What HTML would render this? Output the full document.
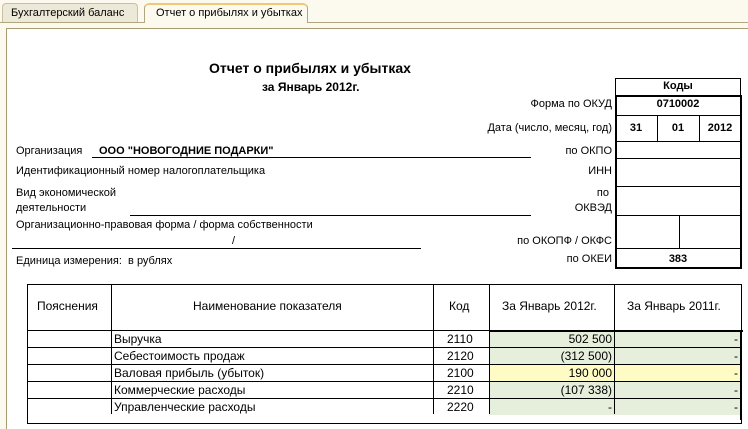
<!DOCTYPE html>
<html><head><meta charset="utf-8"><style>
body{margin:0;width:748px;height:411px;overflow:hidden;background:#fcf9ee;font-family:"Liberation Sans",Arial,sans-serif;font-size:11px;color:#000;position:relative}
.a{position:absolute;white-space:nowrap}
.r{text-align:right}
.c{text-align:center}
.b{font-weight:bold}
.hl{position:absolute;height:1px;background:#000}
.vl{position:absolute;width:1px;background:#000}
</style></head><body>
<!-- tabs -->
<div class="a" style="left:2px;top:3px;width:134px;height:19px;background:#ece9d8;border:1px solid #c8c0a0;border-bottom:none;border-radius:4px 4px 0 0"></div>
<div class="a" style="left:11px;top:7px;font-size:11px">Бухгалтерский баланс</div>
<div class="a" style="left:0;top:22px;width:748px;height:1px;background:#b0a680"></div>
<div class="a" style="left:144px;top:3px;width:164px;height:20px;background:#fcf9ee;border:1px solid #b0a680;border-bottom:none;border-top:2px solid #f0c878;border-radius:5px 5px 0 0;box-sizing:border-box"></div>
<div class="a" style="left:156px;top:7px;font-size:11px">Отчет о прибылях и убытках</div>
<!-- panel -->
<div class="a" style="left:6px;top:28px;width:760px;height:400px;background:#fff;border:1px solid #a89c70;border-width:1px 0 0 1px"></div>

<div class="a b" style="left:209px;top:60px;font-size:14px">Отчет о прибылях и убытках</div>
<div class="a b" style="left:262px;top:80px;font-size:12px">за Январь 2012г.</div>

<!-- codes box -->
<div class="a" style="left:615px;top:78px;width:126px;height:18px;border:1px solid #000;box-sizing:border-box"></div>
<div class="a b c" style="left:615px;top:80px;width:126px">Коды</div>
<div class="a" style="left:615px;top:95px;width:127px;height:174px;border:2px solid #000;box-sizing:border-box"></div>
<div class="hl" style="left:616px;top:115px;width:125px"></div>
<div class="hl" style="left:616px;top:141px;width:125px"></div>
<div class="hl" style="left:616px;top:158px;width:125px"></div>
<div class="hl" style="left:616px;top:186px;width:125px"></div>
<div class="hl" style="left:616px;top:215px;width:125px"></div>
<div class="hl" style="left:616px;top:248px;width:125px"></div>
<div class="vl" style="left:657px;top:115px;height:26px"></div>
<div class="vl" style="left:699px;top:115px;height:26px"></div>
<div class="vl" style="left:679px;top:215px;height:33px"></div>
<div class="a b c" style="left:615px;top:98px;width:126px">0710002</div>
<div class="a b c" style="left:615px;top:122px;width:42px">31</div>
<div class="a b c" style="left:657px;top:122px;width:42px">01</div>
<div class="a b c" style="left:699px;top:122px;width:42px">2012</div>
<div class="a b c" style="left:615px;top:253px;width:126px">383</div>

<div class="a r" style="right:136px;top:98px">Форма по ОКУД</div>
<div class="a r" style="right:136px;top:122px">Дата (число, месяц, год)</div>
<div class="a r" style="right:136px;top:145px">по ОКПО</div>
<div class="a r" style="right:136px;top:165px">ИНН</div>
<div class="a r" style="right:139px;top:187px">по</div>
<div class="a r" style="right:136px;top:202px">ОКВЭД</div>
<div class="a r" style="right:136px;top:235px">по ОКОПФ / ОКФС</div>
<div class="a r" style="right:136px;top:253px">по ОКЕИ</div>

<div class="a" style="left:16px;top:145px">Организация</div>
<div class="a b" style="left:99px;top:145px">ООО "НОВОГОДНИЕ ПОДАРКИ"</div>
<div class="hl" style="left:92px;top:157px;width:439px"></div>
<div class="a" style="left:16px;top:165px">Идентификационный номер налогоплательщика</div>
<div class="a" style="left:16px;top:187px">Вид экономической</div>
<div class="a" style="left:16px;top:202px">деятельности</div>
<div class="hl" style="left:130px;top:215px;width:401px"></div>
<div class="a" style="left:16px;top:219px">Организационно-правовая форма / форма собственности</div>
<div class="a" style="left:232px;top:235px">/</div>
<div class="hl" style="left:12px;top:248px;width:409px"></div>
<div class="a" style="left:16px;top:255px">Единица измерения:&nbsp; в рублях</div>

<!-- table -->
<div class="a" style="left:489px;top:330px;width:252px;height:85px;background:#e6eedc"></div>
<div class="a" style="left:489px;top:364px;width:252px;height:17px;background:#fefcc4"></div>
<div class="a" style="left:27px;top:284px;width:715px;height:140px;border:1px solid #000;box-sizing:border-box"></div>
<div class="vl" style="left:111px;top:284px;height:130px"></div>
<div class="vl" style="left:433px;top:284px;height:130px"></div>
<div class="vl" style="left:489px;top:284px;height:130px"></div>
<div class="vl" style="left:614px;top:284px;height:130px"></div>
<div class="hl" style="left:27px;top:330px;width:715px"></div>
<div class="hl" style="left:489px;top:330px;width:254px;height:2px"></div>
<div class="vl" style="left:740px;top:330px;height:90px;width:2px"></div>
<div class="hl" style="left:27px;top:347px;width:715px"></div>
<div class="hl" style="left:27px;top:364px;width:715px"></div>
<div class="hl" style="left:27px;top:381px;width:715px"></div>
<div class="hl" style="left:27px;top:398px;width:715px"></div>

<div class="a" style="left:37px;top:299px;font-size:12px">Пояснения</div>
<div class="a" style="left:193px;top:299px;font-size:12px">Наименование показателя</div>
<div class="a" style="left:449px;top:299px;font-size:12px">Код</div>
<div class="a" style="left:502px;top:299px;font-size:12px">За Январь 2012г.</div>
<div class="a" style="left:627px;top:299px;font-size:12px">За Январь 2011г.</div>

<div class="a" style="left:114px;top:332px;font-size:12px">Выручка</div>
<div class="a" style="left:114px;top:349px;font-size:12px">Себестоимость продаж</div>
<div class="a" style="left:114px;top:366px;font-size:12px">Валовая прибыль (убыток)</div>
<div class="a" style="left:114px;top:383px;font-size:12px">Коммерческие расходы</div>
<div class="a" style="left:114px;top:400px;font-size:12px">Управленческие расходы</div>

<div class="a" style="left:447px;top:332px;font-size:12px">2110</div>
<div class="a" style="left:447px;top:349px;font-size:12px">2120</div>
<div class="a" style="left:447px;top:366px;font-size:12px">2100</div>
<div class="a" style="left:447px;top:383px;font-size:12px">2210</div>
<div class="a" style="left:447px;top:400px;font-size:12px">2220</div>

<div class="a r" style="right:136px;top:332px;font-size:12px">502 500</div>
<div class="a r" style="right:136px;top:349px;font-size:12px">(312 500)</div>
<div class="a r" style="right:136px;top:366px;font-size:12px">190 000</div>
<div class="a r" style="right:136px;top:383px;font-size:12px">(107 338)</div>
<div class="a r" style="right:136px;top:400px;font-size:12px">-</div>
<div class="a r" style="right:10px;top:332px;font-size:12px">-</div>
<div class="a r" style="right:10px;top:349px;font-size:12px">-</div>
<div class="a r" style="right:10px;top:366px;font-size:12px">-</div>
<div class="a r" style="right:10px;top:383px;font-size:12px">-</div>
<div class="a r" style="right:10px;top:400px;font-size:12px">-</div>
</body></html>
